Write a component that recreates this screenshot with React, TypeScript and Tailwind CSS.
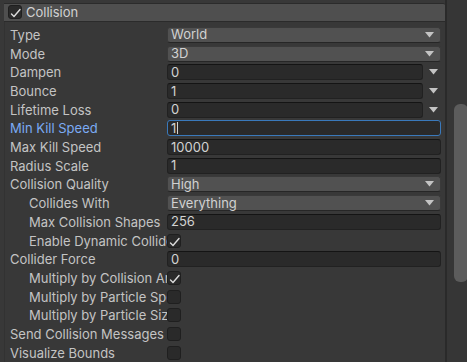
import React from "react";

type Row =
  | { label: string; kind: "dropdown"; value: string; indent?: boolean }
  | { label: string; kind: "field"; value: string; indent?: boolean; arrow?: boolean; focused?: boolean; blue?: boolean }
  | { label: string; kind: "check"; checked: boolean; indent?: boolean };

const rows: Row[] = [
  { label: "Type", kind: "dropdown", value: "World" },
  { label: "Mode", kind: "dropdown", value: "3D" },
  { label: "Dampen", kind: "field", value: "0", arrow: true },
  { label: "Bounce", kind: "field", value: "1", arrow: true },
  { label: "Lifetime Loss", kind: "field", value: "0", arrow: true },
  { label: "Min Kill Speed", kind: "field", value: "1", focused: true, blue: true },
  { label: "Max Kill Speed", kind: "field", value: "10000" },
  { label: "Radius Scale", kind: "field", value: "1" },
  { label: "Collision Quality", kind: "dropdown", value: "High" },
  { label: "Collides With", kind: "dropdown", value: "Everything", indent: true },
  { label: "Max Collision Shapes", kind: "field", value: "256", indent: true },
  { label: "Enable Dynamic Colliders", kind: "check", checked: true, indent: true },
  { label: "Collider Force", kind: "field", value: "0" },
  { label: "Multiply by Collision Angle", kind: "check", checked: true, indent: true },
  { label: "Multiply by Particle Speed", kind: "check", checked: false, indent: true },
  { label: "Multiply by Particle Size", kind: "check", checked: false, indent: true },
  { label: "Send Collision Messages", kind: "check", checked: false },
  { label: "Visualize Bounds", kind: "check", checked: false },
];

const Tri = () => (
  <svg width="9" height="6" viewBox="0 0 9 6">
    <path d="M0 0 L9 0 L4.5 5.5 Z" fill="#c4c4c4" />
  </svg>
);

const Check = () => (
  <svg width="14" height="14" viewBox="0 0 14 14" className="absolute left-0 top-0">
    <path d="M2.5 8 L5 10.5 L11 3.5" stroke="#dcdcdc" strokeWidth="1.4" fill="none" strokeLinecap="round" strokeLinejoin="round" />
  </svg>
);

const Box = ({ checked }: { checked: boolean }) => (
  <div className="relative w-[14px] h-[14px] shrink-0 rounded-[3px] bg-[#2a2a2a] border border-[#1f1f1f] box-border">
    {checked && <Check />}
  </div>
);

export default function App() {
  return (
    <div
      className="w-[467px] h-[362px] overflow-hidden bg-[#383838] flex text-[13px]"
      style={{ fontFamily: "Inter, 'Noto Sans', sans-serif" }}
    >
      <div className="w-[445px] flex flex-col shrink-0">
        <div className="ml-[4px] mt-[3px] h-[19px] bg-[#4f4f4f] border-t border-b border-[#2b2b2b] flex items-center pl-[4px] gap-[4px] rounded-tr-[2px]">
          <Box checked />
          <span className="text-[#d2d2d2] leading-none">Collision</span>
        </div>
        <div className="ml-[4px] border-l border-[#323232] flex-1 pt-[4px]">
          {rows.map((r, i) => (
            <div key={i} className="h-[18.69px] flex items-center">
              <div
                className={`w-[162px] shrink-0 overflow-hidden whitespace-nowrap leading-[16px] ${
                  r.indent ? "pl-[24px]" : "pl-[5px]"
                } ${"blue" in r && r.blue ? "text-[#7babf4]" : "text-[#c4c4c4]"}`}
              >
                {r.label}
              </div>
              {r.kind === "dropdown" && (
                <div className="w-[274px] h-[16px] rounded-[3px] bg-[#515151] border border-[#3a3a3a] border-b-[#262626] box-border flex items-center justify-between pl-[3px] pr-[6px] text-[#d2d2d2] leading-none">
                  <span>{r.value}</span>
                  <Tri />
                </div>
              )}
              {r.kind === "field" && (
                <div className="flex items-center">
                  <div
                    className={`${r.arrow ? "w-[256px]" : "w-[274px]"} h-[16px] rounded-[3px] bg-[#2a2a2a] border box-border flex items-center pl-[3px] text-[#d2d2d2] leading-none ${
                      r.focused ? "border-[#3a79bb]" : "border-[#212121] border-t-[#141414]"
                    }`}
                  >
                    <span>{r.value}</span>
                    {r.focused && <span className="ml-[1px] w-[1px] h-[12px] bg-[#d2d2d2]" />}
                  </div>
                  {r.arrow && (
                    <div className="w-[18px] flex justify-center pl-[2px]">
                      <Tri />
                    </div>
                  )}
                </div>
              )}
              {r.kind === "check" && <Box checked={r.checked} />}
            </div>
          ))}
        </div>
      </div>
      <div className="w-[2px] bg-[#2a2a2a] shrink-0" />
      <div className="w-[20px] bg-[#363636] shrink-0 relative">
        <div className="absolute left-[7px] top-[104px] w-[14px] h-[178px] rounded-[6px] bg-[#5c5c5c]" />
      </div>
    </div>
  );
}
